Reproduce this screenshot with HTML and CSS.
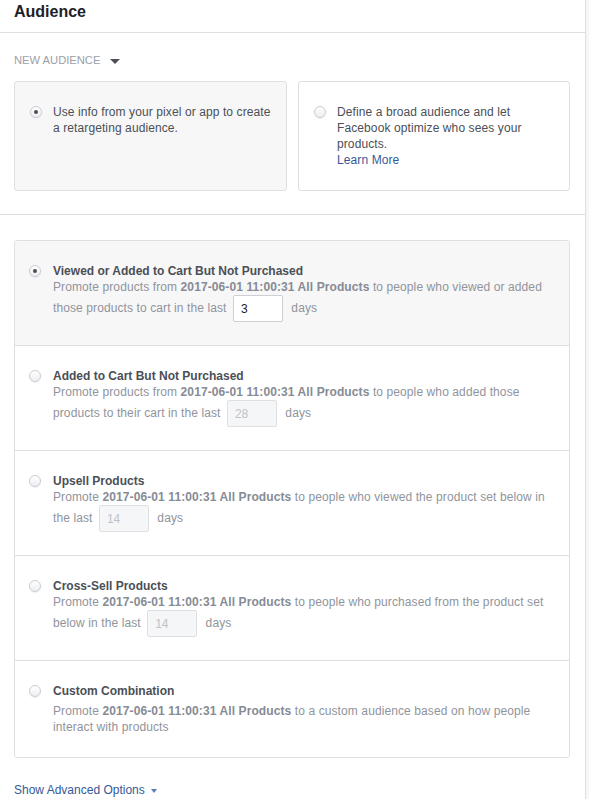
FILE: index.html
```html
<!DOCTYPE html>
<html lang="en">
<head>
    <meta charset="UTF-8">
    <meta name="viewport" content="width=device-width, initial-scale=1.0">
    <title>Audience</title>
    <link rel="stylesheet" href="styles.css">
</head>
<body>
    <div class="page">
        <div class="panel">
            <header class="panel-header">
                <h1>Audience</h1>
            </header>

            <div class="section">
                <div class="dropdown-label">New Audience <span class="caret"></span></div>

                <div class="choice-cards">
                    <div class="choice-card selected">
                        <span class="radio checked"></span>
                        <p>Use info from your pixel or app to create a retargeting audience.</p>
                    </div>
                    <div class="choice-card">
                        <span class="radio"></span>
                        <p>Define a broad audience and let Facebook optimize who sees your products.<br><a href="#">Learn More</a></p>
                    </div>
                </div>
            </div>

            <hr class="divider">

            <div class="section">
                <div class="option-list">
                    <div class="option selected">
                        <span class="radio checked"></span>
                        <div class="option-body">
                            <div class="option-title">Viewed or Added to Cart But Not Purchased</div>
                            <div class="option-desc">Promote products from <b>2017-06-01 11:00:31 All Products</b> to people who viewed or added those products to cart in the last <input type="text" class="days-input" value="3"> days</div>
                        </div>
                    </div>
                    <div class="option">
                        <span class="radio"></span>
                        <div class="option-body">
                            <div class="option-title">Added to Cart But Not Purchased</div>
                            <div class="option-desc">Promote products from <b>2017-06-01 11:00:31 All Products</b> to people who added those products to their cart in the last <input type="text" class="days-input" value="28" disabled> days</div>
                        </div>
                    </div>
                    <div class="option">
                        <span class="radio"></span>
                        <div class="option-body">
                            <div class="option-title">Upsell Products</div>
                            <div class="option-desc">Promote <b>2017-06-01 11:00:31 All Products</b> to people who viewed the product set below in the last <input type="text" class="days-input" value="14" disabled> days</div>
                        </div>
                    </div>
                    <div class="option">
                        <span class="radio"></span>
                        <div class="option-body">
                            <div class="option-title">Cross-Sell Products</div>
                            <div class="option-desc">Promote <b>2017-06-01 11:00:31 All Products</b> to people who purchased from the product set below in the last <input type="text" class="days-input" value="14" disabled> days</div>
                        </div>
                    </div>
                    <div class="option">
                        <span class="radio"></span>
                        <div class="option-body">
                            <div class="option-title">Custom Combination</div>
                            <div class="option-desc spaced">Promote <b>2017-06-01 11:00:31 All Products</b> to a custom audience based on how people interact with products</div>
                        </div>
                    </div>
                </div>

                <a href="#" class="advanced-link">Show Advanced Options <span class="caret small"></span></a>
            </div>
        </div>
        <div class="side-strip"></div>
    </div>
</body>
</html>
```

FILE: styles.css
```css
body {
    margin: 0;
    font-family: 'Liberation Sans', Arial, sans-serif;
    font-size: 12px;
    color: #4b4f56;
    background-color: #fff;
}

.page {
    display: flex;
    min-height: 799px;
}

.panel {
    width: 585px;
    border-right: 1px solid #dddfe2;
    flex-shrink: 0;
}

.side-strip {
    flex: 1;
    background-color: #f5f6f7;
}

/* header */
.panel-header {
    height: 33px;
    box-sizing: border-box;
    border-bottom: 1px solid #dddfe2;
    padding: 2px 14px 0;
}

.panel-header h1 {
    margin: 0;
    font-size: 16px;
    line-height: 20px;
    font-weight: bold;
    color: #1d2129;
}

.section {
    padding: 0 15px 0 14px;
}

.dropdown-label {
    margin-top: 19px;
    line-height: 16px;
    text-transform: uppercase;
    color: #9ba0a8;
    font-size: 11.2px;
}

.caret {
    display: inline-block;
    width: 0;
    height: 0;
    margin-left: 6px;
    border-left: 5px solid transparent;
    border-right: 5px solid transparent;
    border-top: 5px solid #4b4f56;
    vertical-align: middle;
}

.caret.small {
    margin-left: 3px;
    border-left-width: 3.5px;
    border-right-width: 3.5px;
    border-top: 4px solid #5b7bb6;
}

/* top choice cards */
.choice-cards {
    display: grid;
    grid-template-columns: 273px 272px;
    gap: 11px;
    margin-top: 13px;
}

.choice-card {
    display: flex;
    gap: 11px;
    height: 110px;
    box-sizing: border-box;
    padding: 22px 15px 0;
    border: 1px solid #dddfe2;
    border-radius: 3px;
    background-color: #fff;
}

.choice-card.selected {
    background-color: #f7f7f7;
}

.choice-card p {
    margin: 0;
    line-height: 16px;
    letter-spacing: 0.1px;
    color: #4b4f56;
}

.choice-card .radio {
    margin-top: 2px;
}

a {
    color: #365899;
    text-decoration: none;
}

/* radio buttons */
.radio {
    flex-shrink: 0;
    position: relative;
    width: 12px;
    height: 12px;
    box-sizing: border-box;
    border: 1px solid #c9ccd1;
    border-radius: 50%;
    background: linear-gradient(#ffffff, #eceef1);
    box-shadow: 0 1px 1px rgba(0, 0, 0, 0.06);
}

.radio.checked::after {
    content: '';
    position: absolute;
    top: 3px;
    left: 3px;
    width: 4px;
    height: 4px;
    border-radius: 50%;
    background-color: #4b4f56;
}

.divider {
    margin: 23px 0 0;
    border: none;
    border-top: 1px solid #dddfe2;
}

/* retargeting options */
.option-list {
    margin-top: 25px;
    border: 1px solid #dddfe2;
    border-radius: 3px;
    overflow: hidden;
}

.option {
    display: flex;
    gap: 12px;
    padding: 22px 14px 0;
    height: 105px;
    box-sizing: border-box;
    border-top: 1px solid #dddfe2;
    background-color: #fff;
}

.option:first-child {
    border-top: none;
    height: 104px;
}

.option:last-child {
    height: 97px;
}

.option.selected {
    background-color: #f7f7f7;
}

.option .radio {
    margin-top: 2px;
}

.option-title {
    font-weight: bold;
    line-height: 16px;
    color: #4b4f56;
}

.option-desc {
    line-height: 16px;
    letter-spacing: 0.1px;
    color: #90949c;
}

.option-desc.spaced {
    margin-top: 4px;
}

.option-desc b {
    color: #868b94;
}

.days-input {
    width: 50px;
    height: 27px;
    box-sizing: border-box;
    margin: 0 5px 0 3px;
    padding: 0 7px;
    border: 1px solid #ccd0d5;
    border-radius: 2px;
    font-family: 'Liberation Sans', Arial, sans-serif;
    font-size: 12px;
    color: #1d2129;
    background-color: #fff;
    vertical-align: middle;
}

.days-input:disabled {
    background-color: #f5f6f7;
    color: #bec3c9;
    border-color: #dddfe2;
}

.advanced-link {
    display: inline-block;
    margin-top: 24px;
    line-height: 16px;
    color: #365899;
}
```
